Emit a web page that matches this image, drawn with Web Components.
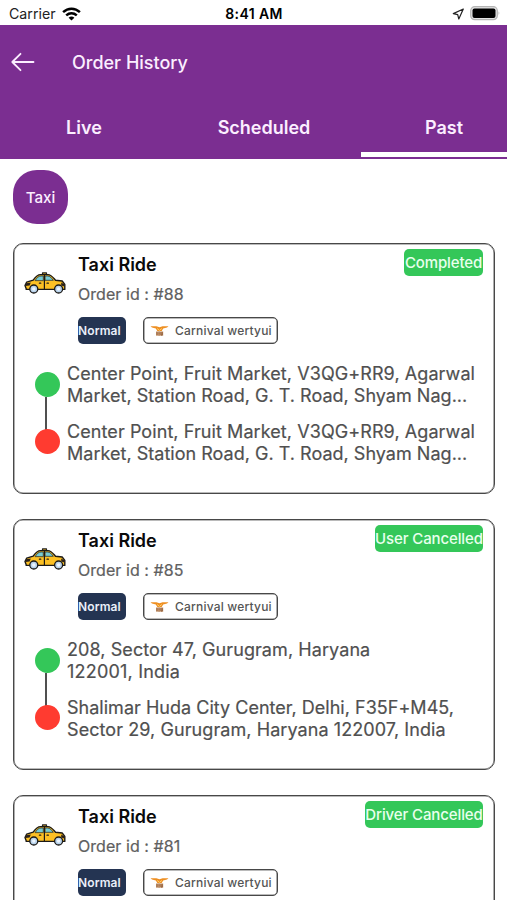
<!DOCTYPE html>
<html lang="en">
<head>
<meta charset="utf-8">
<title>Order History</title>
<style>
html,body{margin:0;padding:0;background:#fff;overflow:hidden;height:900px}
body{font-family:Inter,"Liberation Sans",sans-serif}
</style>
</head>
<body>
<order-app></order-app>
<script>
const define = (name, html, setup) => customElements.define(name, class extends HTMLElement {
  connectedCallback() {
    if (this.shadowRoot) return;
    const t = document.createElement('template');
    t.innerHTML = html;
    this.attachShadow({mode: 'open'}).append(t.content.cloneNode(true));
    if (setup) setup(this, this.shadowRoot);
  }
});

define('status-bar', `<style>
:host{display:grid;grid-template-columns:1fr auto 1fr;align-items:center;height:25px;box-sizing:border-box;padding:2px 6px 0 9px;color:#222;font-size:14.2px}
.l{display:flex;align-items:center;gap:6px}.c{font-weight:600;font-size:14px;letter-spacing:.4px;color:#000;padding-right:2px}
.r{display:flex;justify-content:flex-end;align-items:center;gap:6px}
svg{display:block}
</style>
<div class="l"><span>Carrier</span>
<svg width="19" height="14" viewBox="0 0 19 14" fill="none" stroke="#000" stroke-width="2.5"><path d="M1.1 5.2C6 .6 13 .6 17.9 5.2M4.2 8.4C7.4 5.6 11.6 5.6 14.8 8.4"/><path d="M9.5 13.6 6.6 10.7C8.3 9.2 10.7 9.2 12.4 10.7Z" fill="#000" stroke="none"/></svg></div>
<div class="c"><span>8:41 AM</span></div>
<div class="r"><svg width="12" height="12" viewBox="0 0 12 12" fill="none" stroke="#222" stroke-width="1.2" stroke-linejoin="round"><path d="M11.3 1 1.3 5.6 5.7 6.6 6.8 11Z"/></svg>
<svg width="31" height="15" viewBox="0 0 31 15"><rect x=".7" y=".7" width="26.6" height="13" rx="4" fill="#e4e4e4" stroke="#b4b4b4" stroke-width="1.2"/><rect x="2.5" y="2.4" width="23" height="9.6" rx="2" fill="#000"/><path d="M28.6 5.2Q30.4 7.2 28.6 9.3Z" fill="#aaa"/></svg></div>`);

define('app-header', `<style>
:host{display:flex;align-items:center;gap:37px;height:74px;padding-left:11px;background:#7b2e91;color:#fbeeff;font-size:18px;font-weight:500}
svg{display:block}
</style><svg width="24" height="20" viewBox="0 0 24 20" fill="none" stroke="#fbeeff" stroke-width="1.8" stroke-linecap="round" stroke-linejoin="round"><path d="M22.5 10H1.5M9.5 1.8 1.3 10l8.2 8.2"/></svg><span><slot></slot></span>`);

define('tab-item', `<style>
:host{display:flex;flex:none;width:180px;justify-content:center;align-items:center;height:100%;color:#fbeeff;font-size:18px;font-weight:600}
</style><span><slot></slot></span>`);

define('tab-bar', `<style>
:host{display:block;height:60px;background:#7b2e91;overflow:hidden;position:relative}
.row{display:flex;height:57px;margin-left:-6px}
.ink{position:absolute;left:361px;right:0;top:53px;height:5px;background:#fff}
</style><div class="row"><slot></slot></div><div class="ink"></div>`);

define('category-chip', `<style>
:host{display:flex;align-items:center;justify-content:center;width:55px;height:54px;border-radius:24px;background:#7b2e91;color:#fbeeff;font-size:15.2px;font-weight:500}
</style><span><slot></slot></span>`);

define('taxi-icon', `<style>:host{display:block;width:42px;height:22px}svg{display:block}</style>
<svg width="42" height="22" viewBox="0 0 42 22" stroke-linejoin="round" stroke-linecap="round">
<path d="M18.5 2.2V.9h4v1.3" fill="#f5b81e" stroke="#222" stroke-width="1.2"/>
<path d="M2.2 16.8 1 13.6 2.6 10.2 9.2 8.2C11.4 5 13.4 2.6 16.4 2.6H24C27.2 2.6 29.2 5.6 31.5 8.2L38.2 9 40.8 12.4V17.4H2.2Z" fill="#fcc024" stroke="#1c1a17" stroke-width="1.4"/>
<path d="M11.3 8.3C13 5.7 14.5 4 17 4h2.3v4.3ZM21.4 4h2.2c2.3 0 3.8 2 5.7 4.3h-7.9Z" fill="#76cbd5" stroke="#263437" stroke-width=".8"/>
<path d="M20.4 3V17.2M23 11.2h1.4M15.4 11.2h1.4" stroke="#1c1a17" stroke-width="1.2" fill="none"/>
<path d="M2.2 11.3 6.8 10.6 5.6 13.4 1.6 14ZM37.2 10.4l3.3 2v2l-3.3-1Z" fill="#2b211b"/>
<g fill="#b9d3ec" stroke="#1c1a17" stroke-width="1.3"><circle cx="9.8" cy="17" r="4"/><circle cx="34.6" cy="17" r="4"/></g>
<g fill="#edf6ff"><circle cx="9.8" cy="17" r="1.7"/><circle cx="34.6" cy="17" r="1.7"/></g></svg>`);

define('vendor-tag', `<style>
:host{display:flex;align-items:center;gap:6px;box-sizing:border-box;width:135px;height:27px;border:1px solid #484848;box-shadow:inset 0 0 0 .6px #777;border-radius:5px;padding-left:6px;color:#555;font-size:12px;font-weight:500;white-space:nowrap;letter-spacing:.2px}
svg{display:block;flex:none}
</style><svg width="19" height="12" viewBox="0 0 19 12"><path d="M.5 1.2H6.4L9.5 2.3 12.6 1.2H18.5L17 2.6 13.2 3.4 11.7 6H7.3L5.8 3.4 2 2.6Z" fill="#ee8f22"/><path d="M7.2 3.5 9.5 5.4 11.8 3.5" stroke="#ffd06c" fill="none"/><path d="M6 6.4h7.2v4.3H6Z" fill="#c99a72"/><path d="M7 7.1v3M8.6 7.1h1M8.6 8.6h1M8.6 10h1M11 7.1v3h1.3v-3" stroke="#885735" stroke-width=".8" fill="none"/></svg><span><slot></slot></span>`);

define('route-stop', `<style>
:host{display:flex;height:43px;margin-bottom:15px;gap:7px;align-items:center}
.dot{width:25px;height:25px;margin-top:-1px;border-radius:50%;background:var(--dot);flex:none;position:relative}
:host([linked]) .dot::after{content:"";position:absolute;left:10px;top:25px;width:2px;height:33px;background:#505050}
:host(:not([linked])) .dot{margin-top:-2px}
.t{color:#505050;font-size:18px;line-height:21.6px;letter-spacing:.08px;-webkit-text-stroke:.2px #505050;white-space:nowrap}
</style><div class="dot"></div><div class="t"><slot></slot></div>`);

define('ride-card', `<style>
:host{display:block;position:relative;box-sizing:border-box;height:251px;border:1px solid #484848;box-shadow:inset 0 0 0 .6px #777;border-radius:10px;margin-bottom:25px;background:#fff}
.top{display:flex;height:104px;gap:12px;padding-left:10px}
taxi-icon{margin-top:28px;flex:none}
.info{display:flex;flex-direction:column;padding-top:10px}
.h{font-size:18px;line-height:22px;font-weight:600;color:#0a0a0a}
.id{font-size:16px;line-height:20px;margin-top:8px;color:#606060;letter-spacing:.06px;-webkit-text-stroke:.2px #606060}
.tags{display:flex;gap:17px;margin-top:13px}
.n{width:48px;height:27px;box-sizing:border-box;border-radius:5px;background:#243452;color:#e9effa;font-size:12px;font-weight:600;line-height:27px;letter-spacing:.12px}
.badge{position:absolute;top:5px;right:11px;height:27px;line-height:27px;border-radius:5px;background:#34c759;color:#e8ffed;font-size:15px;font-weight:500;letter-spacing:-.12px;text-align:center;white-space:nowrap}
.route{padding:15px 0 0 21px}
</style>
<div class="top"><taxi-icon></taxi-icon><div class="info"><div class="h"><span>Taxi Ride</span></div><div class="id"><span class="oid"></span></div>
<div class="tags"><div class="n"><span>Normal</span></div><vendor-tag>Carnival wertyui</vendor-tag></div></div></div>
<div class="badge"><span class="bt"></span></div><div class="route"><slot></slot></div>`, (el, r) => {
  r.querySelector('.oid').textContent = 'Order id : #' + el.getAttribute('order');
  r.querySelector('.bt').textContent = el.getAttribute('status');
  r.querySelector('.badge').style.width = el.getAttribute('badge-width') + 'px';
});

define('order-app', `<style>
:host{display:block;width:507px;height:900px;overflow:hidden;background:#fff}
.chips{padding:11px 13px 19px}
.list{padding:0 12px 0 13px}
.m{letter-spacing:.02px}.d{letter-spacing:.2px}
</style>
<status-bar></status-bar><app-header>Order History</app-header>
<tab-bar><tab-item>Live</tab-item><tab-item>Scheduled</tab-item><tab-item>Past</tab-item></tab-bar>
<div class="chips"><category-chip>Taxi</category-chip></div>
<div class="list">
<ride-card order="88" status="Completed" badge-width="79">
<route-stop linked style="--dot:#34c759"><div>Center Point, Fruit Market, V3QG+RR9, Agarwal</div><div class="m">Market, Station Road, G. T. Road, Shyam Nag...</div></route-stop>
<route-stop style="--dot:#ff3b30"><div>Center Point, Fruit Market, V3QG+RR9, Agarwal</div><div class="m">Market, Station Road, G. T. Road, Shyam Nag...</div></route-stop></ride-card>
<ride-card order="85" status="User Cancelled" badge-width="108">
<route-stop linked style="--dot:#34c759"><div>208, Sector 47, Gurugram, Haryana</div><div class="d">122001, India</div></route-stop>
<route-stop style="--dot:#ff3b30"><div class="m">Shalimar Huda City Center, Delhi, F35F+M45,</div><div>Sector 29, Gurugram, Haryana 122007, India</div></route-stop></ride-card>
<ride-card order="81" status="Driver Cancelled" badge-width="118"></ride-card>
</div>`);
</script>
</body>
</html>
